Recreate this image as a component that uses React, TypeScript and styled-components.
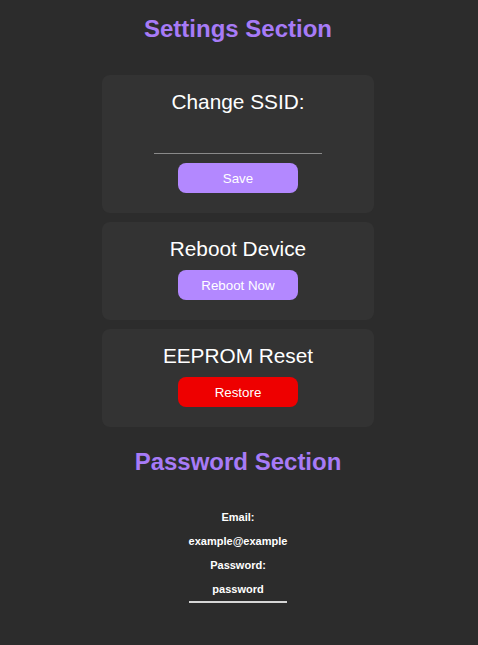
import React from "react";
import styled, { createGlobalStyle } from "styled-components";

const Global = createGlobalStyle`
  html, body {
    margin: 0;
    padding: 0;
    background: #2c2c2c;
  }
  body {
    font-family: "Liberation Sans", Arial, sans-serif;
    color: #ffffff;
  }
`;

const Page = styled.div`
  display: flex;
  flex-direction: column;
  align-items: center;
  padding: 15px 2px 40px 0;
  min-height: 645px;
  box-sizing: border-box;
  background: #2c2c2c;
`;

const SectionTitle = styled.h2<{ $top: number; $bottom: number }>`
  margin: ${(p) => p.$top}px 0 ${(p) => p.$bottom}px;
  font-size: 24px;
  font-weight: bold;
  line-height: 27px;
  color: #a77bf7;
`;

const CardList = styled.div`
  display: flex;
  flex-direction: column;
  gap: 9px;
`;

const Card = styled.div`
  width: 272px;
  box-sizing: border-box;
  background: #333333;
  border-radius: 8px;
  padding: 15px 20px 20px;
  display: flex;
  flex-direction: column;
  align-items: center;
`;

const CardTitle = styled.h3`
  margin: 0 0 9px;
  font-size: 20.8px;
  font-weight: normal;
  line-height: 24px;
  color: #ffffff;
`;

const SsidInput = styled.input`
  width: 168px;
  height: 31px;
  box-sizing: border-box;
  margin: 0 0 9px;
  padding: 0 4px;
  border: none;
  border-bottom: 1px solid #8a8a8a;
  background: transparent;
  color: #ffffff;
  font-family: inherit;
  font-size: 14px;
  outline: none;
  text-align: center;
`;

const ActionButton = styled.button<{ $danger?: boolean }>`
  width: 120px;
  height: 30px;
  border: none;
  border-radius: 8px;
  background: ${(p) => (p.$danger ? "#ee0000" : "#b388ff")};
  color: #ffffff;
  font-family: "Liberation Sans", Arial, sans-serif;
  font-size: 13.33px;
  cursor: pointer;
  padding: 0;
`;

const Credentials = styled.div`
  display: inline-flex;
  flex-direction: column;
  align-items: stretch;
  text-align: center;
`;

const CredLine = styled.div<{ $underline?: boolean }>`
  font-size: 11px;
  font-weight: bold;
  line-height: 24px;
  color: #ffffff;
  white-space: nowrap;
  border-bottom: ${(p) => (p.$underline ? "2px solid #d6d6d6" : "none")};
`;

export default function App() {
  return (
    <>
      <Global />
      <Page>
        <SectionTitle $top={0} $bottom={33}>
          Settings Section
        </SectionTitle>
        <CardList>
          <Card>
            <CardTitle>Change SSID:</CardTitle>
            <SsidInput type="text" aria-label="SSID" />
            <ActionButton>Save</ActionButton>
          </Card>
          <Card>
            <CardTitle>Reboot Device</CardTitle>
            <ActionButton>Reboot Now</ActionButton>
          </Card>
          <Card>
            <CardTitle>EEPROM Reset</CardTitle>
            <ActionButton $danger>Restore</ActionButton>
          </Card>
        </CardList>
        <SectionTitle $top={21} $bottom={30}>
          Password Section
        </SectionTitle>
        <Credentials>
          <CredLine>Email:</CredLine>
          <CredLine>example@example</CredLine>
          <CredLine>Password:</CredLine>
          <CredLine $underline>password</CredLine>
        </Credentials>
      </Page>
    </>
  );
}
